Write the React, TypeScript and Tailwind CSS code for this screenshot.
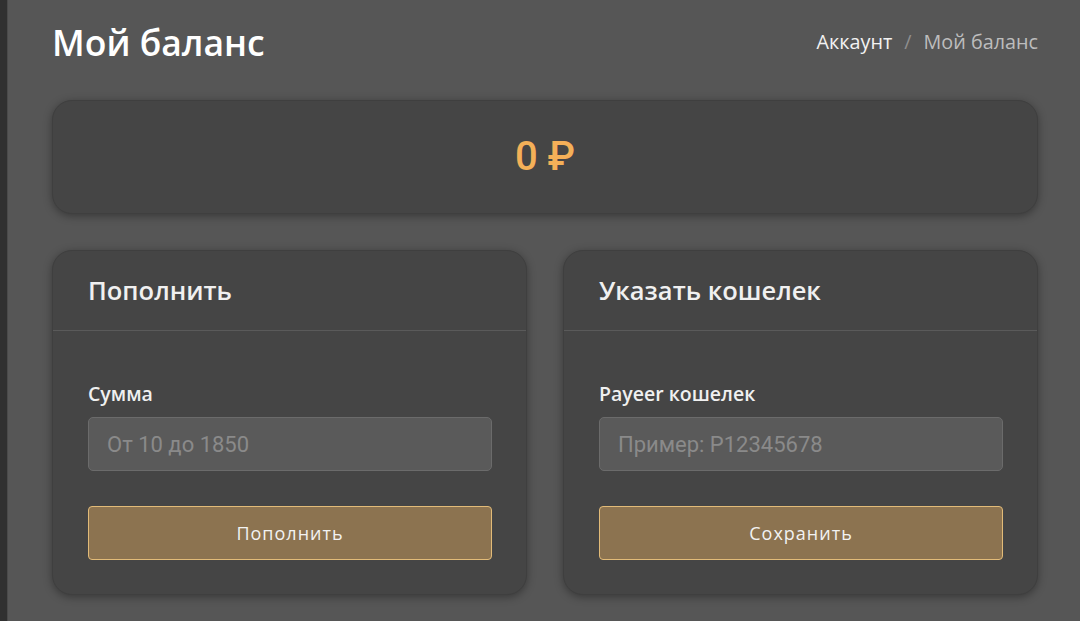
import { useState } from 'react';

function FormCard({
  title,
  label,
  placeholder,
  button,
}: {
  title: string;
  label: string;
  placeholder: string;
  button: string;
}) {
  const [value, setValue] = useState('');

  return (
    <div className="bg-[#454545] rounded-[20px] shadow-[0_2px_8px_rgba(0,0,0,0.35)] border border-[#3f3f3f]">
      <div className="h-[80px] flex items-center px-[35px] border-b border-[#5a5a5a]">
        <h2 className="text-[25.5px] font-semibold text-[#f0f0f0] leading-none">{title}</h2>
      </div>
      <div className="pl-[35px] pr-[34px] pt-[50px] pb-[34px]">
        <label className="block text-[19.5px] font-semibold text-[#f0f0f0] leading-[26px] mb-[10px]">
          {label}
        </label>
        <input
          value={value}
          onChange={(e) => setValue(e.target.value)}
          placeholder={placeholder}
          className="w-full h-[54px] px-[18px] bg-[#5a5a5a] border border-[#6b6b6b] rounded-[5px] text-[22px] text-[#eee] placeholder:text-[#8a8a8a] outline-none font-['Roboto',sans-serif]"
        />
        <button className="mt-[35px] w-full h-[54px] bg-[#8c7350] border border-[#e2bb78] rounded-[4px] text-[18px] tracking-[1px] text-[#f2f2f2]">
          {button}
        </button>
      </div>
    </div>
  );
}

export default function App() {
  return (
    <div className="min-h-[621px] flex bg-[#565656] font-['Open_Sans',sans-serif]">
      <div className="w-[8px] bg-[#303030] border-r border-[#4a4a4a]" />
      <div className="flex-1 pl-[44px] pr-[42px] pb-[26px]">
        <div className="flex items-center justify-between pt-[18px] mb-[34px]">
          <h1 className="text-[35.5px] font-semibold text-white leading-[48px]">Мой баланс</h1>
          <div className="flex items-center gap-[12px] text-[19.8px] leading-none">
            <span className="text-[#f2f2f2]">Аккаунт</span>
            <span className="text-[#8e8e8e]">/</span>
            <span className="text-[#bdbdbd]">Мой баланс</span>
          </div>
        </div>

        <div className="h-[114px] bg-[#454545] rounded-[20px] shadow-[0_2px_8px_rgba(0,0,0,0.35)] border border-[#3f3f3f] flex items-center justify-center">
          <span className="text-[40px] font-medium text-[#f4b058] font-['Roboto',sans-serif]">0 ₽</span>
        </div>

        <div className="grid grid-cols-2 gap-[36px] mt-[36px]">
          <FormCard title="Пополнить" label="Сумма" placeholder="От 10 до 1850" button="Пополнить" />
          <FormCard
            title="Указать кошелек"
            label="Payeer кошелек"
            placeholder="Пример: P12345678"
            button="Сохранить"
          />
        </div>
      </div>
    </div>
  );
}
